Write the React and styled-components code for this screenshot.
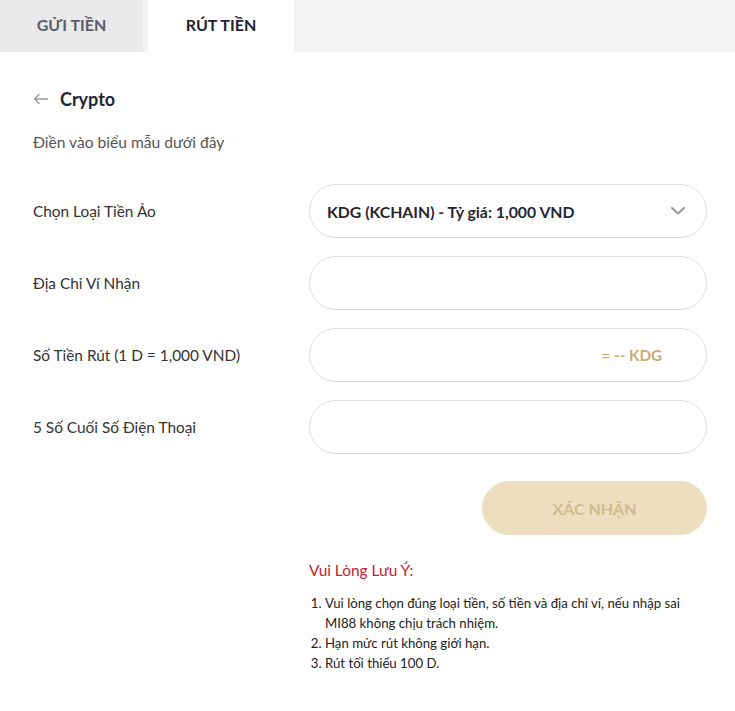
import React from "react";
import styled, { createGlobalStyle } from "styled-components";

const Global = createGlobalStyle`
  body { margin: 0; background: #fff; font-family: Lato, "Noto Sans", sans-serif; }
  * { box-sizing: border-box; }
`;

const Page = styled.div`
  width: 735px;
  min-height: 711px;
  background: #fff;
`;

const TabBar = styled.div`
  display: flex;
  height: 52px;
  background: #f3f3f3;
`;

const Tab = styled.div`
  width: ${(p) => p.$w}px;
  margin-left: ${(p) => p.$ml || 0}px;
  display: flex;
  align-items: center;
  justify-content: center;
  padding-bottom: 4px;
  font-size: 16px;
  font-weight: 700;
  color: ${(p) => (p.$active ? "#1f2430" : "#5a5e66")};
  background: ${(p) => (p.$active ? "#fff" : "#e9e9eb")};
`;

const Content = styled.div`
  padding: 35px 28px 40px 33px;
`;

const Header = styled.div`
  display: flex;
  align-items: center;
  gap: 11px;
  height: 24px;
`;

const Title = styled.h2`
  margin: 0;
  font-size: 18px;
  font-weight: 700;
  color: #1f2733;
`;

const Subtitle = styled.p`
  margin: 21px 0 0;
  font-size: 15.6px;
  line-height: 20px;
  color: #555;
`;

const Form = styled.div`
  margin-top: 32px;
  display: flex;
  flex-direction: column;
  gap: 18px;
`;

const Row = styled.div`
  display: grid;
  grid-template-columns: 276px 1fr;
  align-items: center;
`;

const Label = styled.label`
  font-size: 15.4px;
  color: #333;
`;

const Field = styled.div`
  height: 54px;
  border: 1px solid #dcdcdc;
  border-radius: 27px;
  display: flex;
  align-items: center;
  justify-content: ${(p) => (p.$end ? "flex-end" : "space-between")};
  padding: 0 ${(p) => (p.$end ? 44 : 20)}px 0 17px;
  font-size: 15.8px;
  font-weight: 700;
  color: #1f2733;
`;

const Suffix = styled.span`
  color: #c9ab74;
  font-weight: 700;
  font-size: 15.2px;
`;

const Actions = styled.div`
  margin-top: 27px;
  display: flex;
  justify-content: flex-end;
`;

const Button = styled.button`
  width: 225px;
  height: 54px;
  border: none;
  border-radius: 27px;
  background: #ecdebf;
  color: #d2bb8c;
  font-family: inherit;
  font-size: 16px;
  font-weight: 700;
`;

const Notes = styled.div`
  margin: 25px 0 0 276px;
`;

const NoteTitle = styled.div`
  font-size: 15.4px;
  line-height: 20px;
  color: #c8202f;
`;

const NoteList = styled.ol`
  margin: 13px 0 0;
  padding-left: 16px;
  font-size: 13.2px;
  line-height: 20px;
  color: #222;
`;

export default function App() {
  return (
    <Page>
      <Global />
      <TabBar>
        <Tab $w={143}>GỬI TIỀN</Tab>
        <Tab $w={146} $ml={5} $active>RÚT TIỀN</Tab>
      </TabBar>
      <Content>
        <Header>
          <svg width="16" height="12" viewBox="0 0 16 12" fill="none" stroke="#9a9a9a" strokeWidth="1.4">
            <path d="M15 6H1.5M6.5 1L1.5 6l5 5" />
          </svg>
          <Title>Crypto</Title>
        </Header>
        <Subtitle>Điền vào biểu mẫu dưới đây</Subtitle>
        <Form>
          <Row>
            <Label>Chọn Loại Tiền Ảo</Label>
            <Field>
              <span>KDG (KCHAIN) - Tỷ giá: 1,000 VND</span>
              <svg width="16" height="10" viewBox="0 0 16 10" fill="none" stroke="#9c9c9c" strokeWidth="2.2" strokeLinecap="round" strokeLinejoin="round">
                <path d="M2 2l6 5.5L14 2" />
              </svg>
            </Field>
          </Row>
          <Row>
            <Label>Địa Chỉ Ví Nhận</Label>
            <Field />
          </Row>
          <Row>
            <Label>Số Tiền Rút (1 D = 1,000 VND)</Label>
            <Field $end>
              <Suffix>= -- KDG</Suffix>
            </Field>
          </Row>
          <Row>
            <Label>5 Số Cuối Số Điện Thoại</Label>
            <Field />
          </Row>
        </Form>
        <Actions>
          <Button>XÁC NHẬN</Button>
        </Actions>
        <Notes>
          <NoteTitle>Vui Lòng Lưu Ý:</NoteTitle>
          <NoteList>
            <li>Vui lòng chọn đúng loại tiền, số tiền và địa chỉ ví, nếu nhập sai MI88 không chịu trách nhiệm.</li>
            <li>Hạn mức rút không giới hạn.</li>
            <li>Rút tối thiểu 100 D.</li>
          </NoteList>
        </Notes>
      </Content>
    </Page>
  );
}
